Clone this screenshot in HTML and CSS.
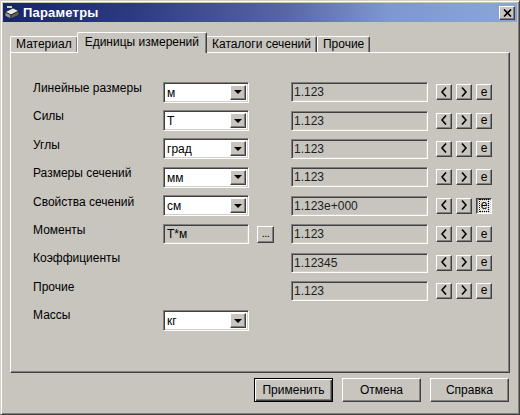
FILE: index.html
```html
<!DOCTYPE html>
<html>
<head>
<meta charset="utf-8">
<title>Параметры</title>
<link rel="stylesheet" href="styles.css">
</head>
<body>
<div class="window">
  <div class="titlebar">
    <svg class="app-icon" width="16" height="16" viewBox="0 0 16 16">
      <polygon points="1,7 9,3 15,6 7,10" fill="#e8e8e8" stroke="#202020" stroke-width="0.8"/>
      <polygon points="1,7 7,10 7,14 1,11" fill="#9a9a9a" stroke="#202020" stroke-width="0.8"/>
      <polygon points="7,10 15,6 15,10 7,14" fill="#606060" stroke="#202020" stroke-width="0.8"/>
      <rect x="3" y="1" width="5" height="2" fill="#d0d0d0"/>
    </svg>
    <span class="title">Параметры</span>
    <div class="close">
      <svg width="9" height="8" viewBox="0 0 9 8"><path d="M1 0.5 L8 7.5 M8 0.5 L1 7.5" stroke="#000" stroke-width="1.6"/></svg>
    </div>
  </div>
  <div class="content">
    <div class="tabs">
      <div class="tab">Материал</div>
      <div class="tab active">Единицы измерений</div>
      <div class="tab">Каталоги сечений</div>
      <div class="tab">Прочие</div>
    </div>
    <div class="panel">
      <div class="grid">
        <div class="label">Линейные размеры</div>
        <div class="combo"><span class="combo-text">м</span><span class="drop"><i class="arrow"></i></span></div>
        <div class="field">1.123</div>
        <div class="spin"><span class="btn"><svg width="6" height="10" viewBox="0 0 6 10"><path d="M5 0.5 L1 5 L5 9.5" fill="none" stroke="#000" stroke-width="1.6"/></svg></span><span class="btn"><svg width="6" height="10" viewBox="0 0 6 10"><path d="M1 0.5 L5 5 L1 9.5" fill="none" stroke="#000" stroke-width="1.6"/></svg></span><span class="btn">e</span></div>

        <div class="label">Силы</div>
        <div class="combo"><span class="combo-text">Т</span><span class="drop"><i class="arrow"></i></span></div>
        <div class="field">1.123</div>
        <div class="spin"><span class="btn"><svg width="6" height="10" viewBox="0 0 6 10"><path d="M5 0.5 L1 5 L5 9.5" fill="none" stroke="#000" stroke-width="1.6"/></svg></span><span class="btn"><svg width="6" height="10" viewBox="0 0 6 10"><path d="M1 0.5 L5 5 L1 9.5" fill="none" stroke="#000" stroke-width="1.6"/></svg></span><span class="btn">e</span></div>

        <div class="label">Углы</div>
        <div class="combo"><span class="combo-text">град</span><span class="drop"><i class="arrow"></i></span></div>
        <div class="field">1.123</div>
        <div class="spin"><span class="btn"><svg width="6" height="10" viewBox="0 0 6 10"><path d="M5 0.5 L1 5 L5 9.5" fill="none" stroke="#000" stroke-width="1.6"/></svg></span><span class="btn"><svg width="6" height="10" viewBox="0 0 6 10"><path d="M1 0.5 L5 5 L1 9.5" fill="none" stroke="#000" stroke-width="1.6"/></svg></span><span class="btn">e</span></div>

        <div class="label">Размеры сечений</div>
        <div class="combo"><span class="combo-text">мм</span><span class="drop"><i class="arrow"></i></span></div>
        <div class="field">1.123</div>
        <div class="spin"><span class="btn"><svg width="6" height="10" viewBox="0 0 6 10"><path d="M5 0.5 L1 5 L5 9.5" fill="none" stroke="#000" stroke-width="1.6"/></svg></span><span class="btn"><svg width="6" height="10" viewBox="0 0 6 10"><path d="M1 0.5 L5 5 L1 9.5" fill="none" stroke="#000" stroke-width="1.6"/></svg></span><span class="btn">e</span></div>

        <div class="label">Свойства сечений</div>
        <div class="combo"><span class="combo-text">см</span><span class="drop"><i class="arrow"></i></span></div>
        <div class="field">1.123e+000</div>
        <div class="spin"><span class="btn"><svg width="6" height="10" viewBox="0 0 6 10"><path d="M5 0.5 L1 5 L5 9.5" fill="none" stroke="#000" stroke-width="1.6"/></svg></span><span class="btn"><svg width="6" height="10" viewBox="0 0 6 10"><path d="M1 0.5 L5 5 L1 9.5" fill="none" stroke="#000" stroke-width="1.6"/></svg></span><span class="btn pressed"><span class="focus">e</span></span></div>

        <div class="label">Моменты</div>
        <div class="combo-area"><div class="readonly">Т*м</div><span class="btn dots">...</span></div>
        <div class="field">1.123</div>
        <div class="spin"><span class="btn"><svg width="6" height="10" viewBox="0 0 6 10"><path d="M5 0.5 L1 5 L5 9.5" fill="none" stroke="#000" stroke-width="1.6"/></svg></span><span class="btn"><svg width="6" height="10" viewBox="0 0 6 10"><path d="M1 0.5 L5 5 L1 9.5" fill="none" stroke="#000" stroke-width="1.6"/></svg></span><span class="btn">e</span></div>

        <div class="label">Коэффициенты</div>
        <div></div>
        <div class="field">1.12345</div>
        <div class="spin"><span class="btn"><svg width="6" height="10" viewBox="0 0 6 10"><path d="M5 0.5 L1 5 L5 9.5" fill="none" stroke="#000" stroke-width="1.6"/></svg></span><span class="btn"><svg width="6" height="10" viewBox="0 0 6 10"><path d="M1 0.5 L5 5 L1 9.5" fill="none" stroke="#000" stroke-width="1.6"/></svg></span><span class="btn">e</span></div>

        <div class="label">Прочие</div>
        <div></div>
        <div class="field">1.123</div>
        <div class="spin"><span class="btn"><svg width="6" height="10" viewBox="0 0 6 10"><path d="M5 0.5 L1 5 L5 9.5" fill="none" stroke="#000" stroke-width="1.6"/></svg></span><span class="btn"><svg width="6" height="10" viewBox="0 0 6 10"><path d="M1 0.5 L5 5 L1 9.5" fill="none" stroke="#000" stroke-width="1.6"/></svg></span><span class="btn">e</span></div>

        <div class="label">Массы</div>
        <div class="combo"><span class="combo-text">кг</span><span class="drop"><i class="arrow"></i></span></div>
        <div></div>
        <div></div>
      </div>
    </div>
    <div class="footer">
      <div class="button default"><span class="button-inner">Применить</span></div>
      <div class="button"><span class="button-inner">Отмена</span></div>
      <div class="button"><span class="button-inner">Справка</span></div>
    </div>
  </div>
</div>
</body>
</html>
```
FILE: styles.css
```css
* { box-sizing: border-box; }

body {
  margin: 0;
  background: #c8c5bf;
  font-family: "Liberation Sans", Arial, sans-serif;
  font-size: 12px;
  color: #000;
}

.window {
  width: 520px;
  height: 415px;
  background: #c8c5bf;
  border: 1px solid;
  border-color: #d4d0c8 #404040 #404040 #d4d0c8;
  box-shadow: inset 1px 1px #fff, inset -1px -1px #808080;
  padding: 2px;
  display: flex;
  flex-direction: column;
}

.titlebar {
  height: 19px;
  display: flex;
  align-items: center;
  padding: 0 2px 0 1px;
  background: linear-gradient(to right, #17256b 0%, #2c3a80 25%, #5866a6 55%, #7e98d0 75%, #8aa6d8 100%);
}

.app-icon { flex: none; }

.title {
  margin-left: 3px;
  color: #fff;
  font-weight: bold;
  font-size: 13px;
  letter-spacing: 0.2px;
}

.close {
  margin-left: auto;
  width: 16px;
  height: 14px;
  background: #c8c5bf;
  border: 1px solid;
  border-color: #fff #404040 #404040 #fff;
  box-shadow: inset -1px -1px #808080;
  display: flex;
  align-items: center;
  justify-content: center;
}

.content {
  flex: 1;
  padding: 10px 7px 0;
  display: flex;
  flex-direction: column;
}

.tabs {
  height: 20px;
  display: flex;
  align-items: flex-end;
  position: relative;
  z-index: 2;
}

.tab {
  height: 16px;
  line-height: 15px;
  padding: 0 5px;
  border-top: 1px solid #fff;
  border-left: 1px solid #fff;
  border-right: 1px solid #404040;
  box-shadow: inset -1px 0 #808080;
  border-radius: 2px 2px 0 0;
  background: #c8c5bf;
  white-space: nowrap;
}

.tab.active {
  height: 21px;
  margin: 0 -1px -1px -1px;
  padding: 0 7px;
  line-height: 19px;
  position: relative;
  z-index: 3;
}

.panel {
  height: 321px;
  border: 1px solid;
  border-color: #fff #404040 #404040 #fff;
  box-shadow: inset -1px -1px #808080;
  padding: 25px 0 0 22px;
}

.grid {
  display: grid;
  grid-template-columns: 130px 128px 145px auto;
  grid-template-rows: repeat(8, 28.4px) 31px;
  align-items: center;
}

.label {
  align-self: start;
  padding-top: 3px;
  line-height: 14px;
  white-space: nowrap;
}

.combo {
  width: 86px;
  height: 21px;
  background: #fff;
  border: 1px solid;
  border-color: #808080 #fff #fff #808080;
  box-shadow: inset 1px 1px #404040, inset -1px -1px #d4d0c8;
  padding: 2px;
  display: flex;
  align-items: stretch;
}

.combo-text {
  flex: 1;
  padding-left: 1px;
  line-height: 15px;
  padding-top: 1px;
}

.drop {
  width: 16px;
  background: #c8c5bf;
  border: 1px solid;
  border-color: #fff #404040 #404040 #fff;
  box-shadow: inset -1px -1px #808080;
  display: flex;
  align-items: center;
  justify-content: center;
}

.arrow {
  width: 0;
  height: 0;
  border-left: 4px solid transparent;
  border-right: 4px solid transparent;
  border-top: 4px solid #000;
}

.combo-area {
  display: flex;
  align-items: center;
  gap: 8px;
}

.readonly {
  width: 86px;
  height: 20px;
  border: 1px solid;
  border-color: #808080 #fff #fff #808080;
  box-shadow: inset 1px 1px #404040, inset -1px -1px #d4d0c8;
  padding: 2px 3px;
  line-height: 15px;
}

.field {
  width: 137px;
  height: 20px;
  border: 1px solid;
  border-color: #808080 #fff #fff #808080;
  box-shadow: inset 1px 1px #404040, inset -1px -1px #d4d0c8;
  padding: 2px 2px;
  line-height: 15px;
  color: #202020;
}

.spin {
  display: flex;
  gap: 4px;
}

.btn {
  width: 16px;
  height: 16px;
  border: 1px solid;
  border-color: #fff #404040 #404040 #fff;
  box-shadow: inset -1px -1px #808080;
  background: #c8c5bf;
  display: flex;
  align-items: center;
  justify-content: center;
  font-size: 12px;
  line-height: 12px;
  padding-bottom: 1px;
}

.btn.dots {
  width: 17px;
  height: 17px;
  align-items: flex-end;
  padding-bottom: 3px;
  font-size: 11px;
  letter-spacing: -0.5px;
}

.btn.pressed {
  border-color: #404040 #fff #fff #404040;
  box-shadow: inset 1px 1px #808080;
  background: repeating-conic-gradient(#fff 0 25%, #c8c5bf 0 50%) 0 0 / 2px 2px;
}

.focus {
  outline: 1px dotted #000;
  padding: 0 1px;
  line-height: 11px;
}

.footer {
  display: flex;
  justify-content: flex-end;
  gap: 9px;
  padding: 5px 1px 0 0;
}

.button {
  width: 79px;
  height: 24px;
  background: #c8c5bf;
  border: 1px solid;
  border-color: #fff #404040 #404040 #fff;
  box-shadow: inset -1px -1px #808080;
  display: flex;
  align-items: center;
  justify-content: center;
}

.button.default {
  border: 1px solid #000;
  box-shadow: inset 1px 1px #fff, inset -1px -1px #404040, inset -2px -2px #808080;
}

.button-inner {
  line-height: 14px;
}
```
